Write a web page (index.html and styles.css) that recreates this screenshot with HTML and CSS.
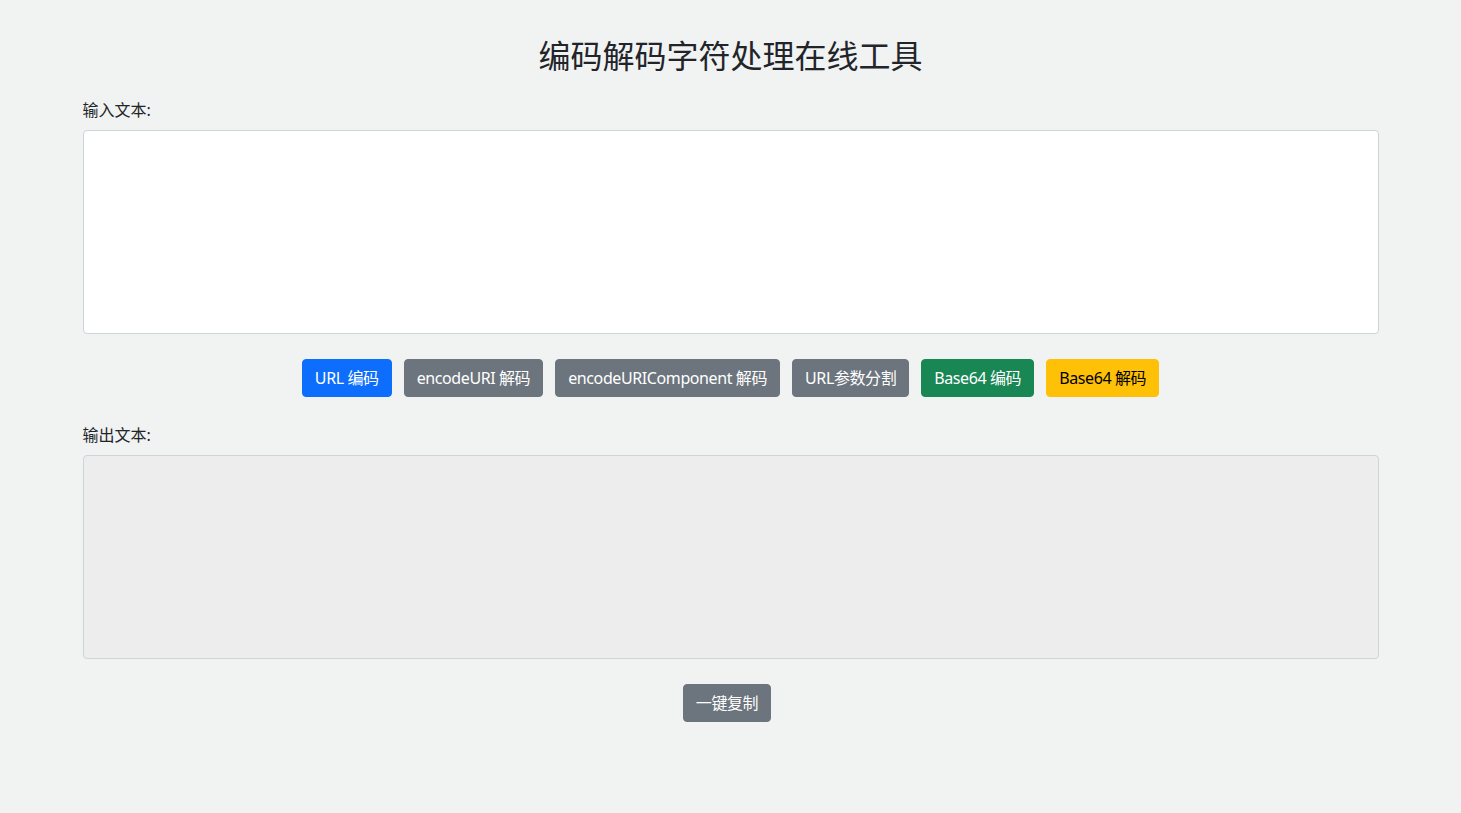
FILE: index.html
```html
<!DOCTYPE html>
<html lang="zh-CN">
<head>
<meta charset="utf-8">
<title>编码解码字符处理在线工具</title>
<link rel="stylesheet" href="styles.css">
</head>
<body>
<div class="container">
  <h2 class="title">编码解码字符处理在线工具</h2>
  <label class="label" for="input">输入文本:</label>
  <textarea id="input" class="field"></textarea>
  <div class="actions">
    <button class="btn btn-primary">URL 编码</button>
    <button class="btn btn-secondary">encodeURI 解码</button>
    <button class="btn btn-secondary">encodeURIComponent 解码</button>
    <button class="btn btn-secondary">URL参数分割</button>
    <button class="btn btn-success">Base64 编码</button>
    <button class="btn btn-warning">Base64 解码</button>
  </div>
  <label class="label" for="output">输出文本:</label>
  <textarea id="output" class="field field-readonly" readonly></textarea>
  <div class="actions actions-copy">
    <button class="btn btn-secondary">一键复制</button>
  </div>
</div>
</body>
</html>
```
FILE: styles.css
```css
* { box-sizing: border-box; }
html, body { margin: 0; padding: 0; }
body {
  background: #f1f2f2;
  color: #212529;
  font-family: "Segoe UI", "Noto Sans", "Noto Sans CJK SC", sans-serif;
  font-size: 16px;
  line-height: 1.5;
}
.container {
  width: 1320px;
  margin: 0 auto;
  padding: 37px 12px 40px;
  display: flex;
  flex-direction: column;
}
.title {
  margin: 0 0 23px;
  text-align: center;
  font-size: 32px;
  font-weight: 400;
  line-height: 1.2;
}
.label {
  display: block;
  margin-bottom: 8px;
}
.field {
  display: block;
  width: 100%;
  height: 204px;
  padding: 6px 12px;
  font: inherit;
  color: #212529;
  background: #fff;
  border: 1px solid #ced4da;
  border-radius: 4px;
  resize: none;
  outline: none;
}
.field-readonly {
  background: #ededed;
}
.actions {
  display: flex;
  justify-content: center;
  gap: 12px;
  margin: 25px 0 26px;
}
.actions-copy {
  padding-right: 7px;
}
.btn {
  font: inherit;
  line-height: 24px;
  letter-spacing: -0.4px;
  padding: 6px 12px;
  border: 1px solid transparent;
  border-radius: 4px;
  color: #fff;
  cursor: pointer;
}
.btn-primary { background: #0d6efd; border-color: #0d6efd; }
.btn-secondary { background: #6c757d; border-color: #6c757d; }
.btn-success { background: #198754; border-color: #198754; }
.btn-warning { background: #ffc107; border-color: #ffc107; color: #000; }
```
